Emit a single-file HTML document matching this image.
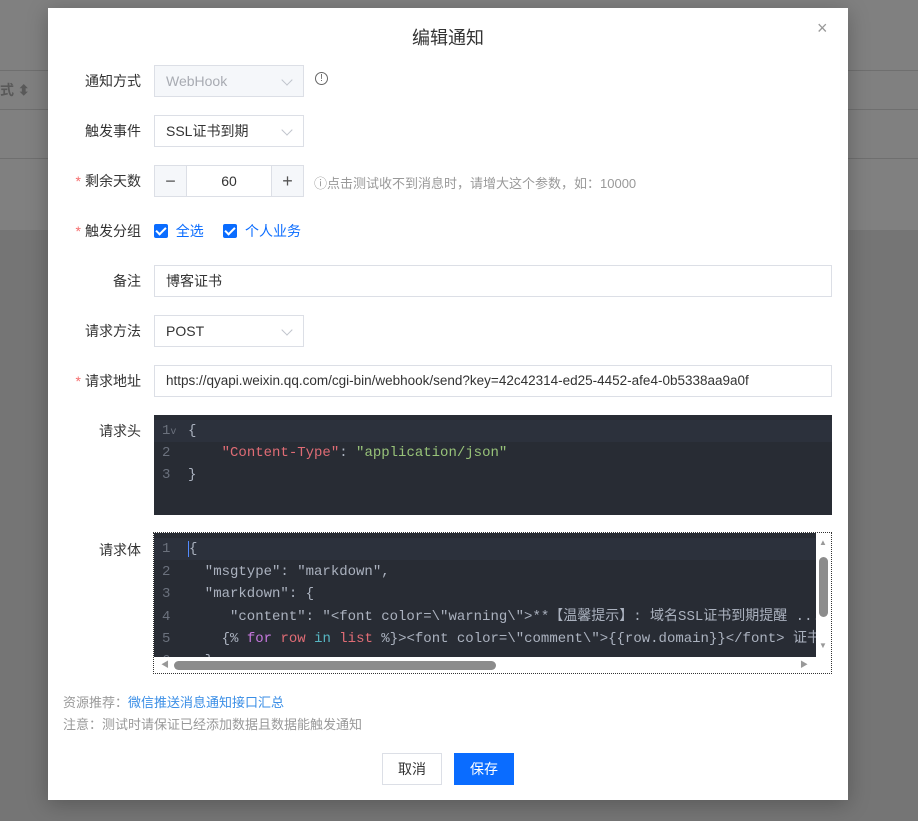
<!DOCTYPE html>
<html><head><meta charset="utf-8"><style>
*{box-sizing:border-box;margin:0;padding:0}
body{width:918px;height:821px;position:relative;overflow:hidden;background:#757575;font-family:"Liberation Sans","Noto Sans CJK SC",sans-serif;font-size:14px;color:#333}
.a{position:absolute}
.top{left:0;top:0;width:918px;height:230px;background:#808080}
.ln{left:0;width:918px;height:1px;background:#6f6f6f}
.dlg{left:48px;top:8px;width:800px;height:792px;background:#fff;box-shadow:0 4px 20px rgba(0,0,0,.25)}
.lbl{width:93px;text-align:right;font-size:14px;color:#333;left:0;line-height:20px}
.lbl i{color:#f56c6c;font-style:normal;margin-right:4px}
.box{border:1px solid #dcdfe6;height:32px;line-height:30px;padding-left:11px;font-size:14px;color:#333;background:#fff}
.arr{position:absolute;right:12px;top:10px;width:8px;height:8px;border-right:1px solid #c0c4cc;border-bottom:1px solid #c0c4cc;transform:rotate(45deg)}
.cb{display:inline-block;width:14px;height:14px;background:#0a6cff;border-radius:2px;position:relative;vertical-align:-2px}
.cb:after{content:"";position:absolute;left:4px;top:1px;width:4px;height:8px;border:solid #fff;border-width:0 2px 2px 0;transform:rotate(45deg)}
.code{font-family:"Liberation Mono","Noto Sans CJK SC",monospace;font-size:14px;background:#282c34;color:#abb2bf}
.row{position:absolute;left:0;height:22px;line-height:22px;white-space:pre}
.g{color:#6b717d;display:inline-block;width:34px;padding-left:8px}
</style></head><body>
<div class="a top"></div>
<div class="a ln" style="top:70px"></div>
<div class="a ln" style="top:109px"></div>
<div class="a ln" style="top:158px"></div>
<div class="a" style="left:0;top:80px;color:#333;font-size:14px;font-weight:bold;opacity:.5">式 ⬍</div>

<div class="a dlg">
<div class="a" style="left:0;width:800px;top:16px;text-align:center;font-size:18px;color:#333">编辑通知</div>
<div class="a" style="left:769px;top:10px;font-size:18px;color:#999">×</div>

<div class="a lbl" style="top:63px">通知方式</div>
<div class="a box" style="left:106px;top:57px;width:150px;background:#f5f7fa;color:#a8abb2">WebHook<span class="arr"></span></div>
<div class="a" style="left:267px;top:64px;width:13px;height:13px;border:1px solid #666;border-radius:50%;font-size:10px;line-height:11px;text-align:center;color:#666">!</div>

<div class="a lbl" style="top:113px">触发事件</div>
<div class="a box" style="left:106px;top:107px;width:150px">SSL证书到期<span class="arr"></span></div>

<div class="a lbl" style="top:163px"><i>*</i>剩余天数</div>
<div class="a" style="left:106px;top:157px;width:150px;height:32px;border:1px solid #dcdfe6;display:flex">
<div style="width:32px;background:#f5f7fa;border-right:1px solid #dcdfe6;text-align:center;line-height:30px;font-size:18px;color:#555">−</div>
<div style="flex:1;text-align:center;line-height:30px">60</div>
<div style="width:32px;background:#f5f7fa;border-left:1px solid #dcdfe6;text-align:center;line-height:30px;font-size:18px;color:#555">+</div></div>
<div class="a" style="left:266px;top:165px;color:#999;font-size:13px">ⓘ点击测试收不到消息时，请增大这个参数，如：10000</div>

<div class="a lbl" style="top:213px"><i>*</i>触发分组</div>
<div class="a" style="left:106px;top:213px;color:#0a6cff;line-height:20px"><span class="cb"></span>&nbsp;&nbsp;全选 &nbsp;&nbsp;&nbsp;&nbsp;<span class="cb"></span>&nbsp;&nbsp;个人业务</div>

<div class="a lbl" style="top:263px">备注</div>
<div class="a box" style="left:106px;top:257px;width:678px">博客证书</div>

<div class="a lbl" style="top:313px">请求方法</div>
<div class="a box" style="left:106px;top:307px;width:150px">POST<span class="arr"></span></div>

<div class="a lbl" style="top:363px"><i>*</i>请求地址</div>
<div class="a box" style="left:106px;top:357px;width:678px;font-size:13.5px">https://qyapi.weixin.qq.com/cgi-bin/webhook/send?key=42c42314-ed25-4452-afe4-0b5338aa9a0f</div>

<div class="a lbl" style="top:413px">请求头</div>
<div class="a code" style="left:106px;top:407px;width:678px;height:100px">
<div class="a" style="left:0;top:5px;width:678px;height:22px;background:#2c313c"></div>
<div class="row" style="top:5px"><span class="g">1<span style="font-size:10px">v</span></span>{</div>
<div class="row" style="top:27px"><span class="g">2</span>    <span style="color:#e06c75">"Content-Type"</span>: <span style="color:#98c379">"application/json"</span></div>
<div class="row" style="top:49px"><span class="g">3</span>}</div>
</div>

<div class="a lbl" style="top:532px">请求体</div>
<div class="a" style="left:105px;top:524px;width:679px;height:142px;border:1px dotted #333;background:#fff;overflow:hidden">
<div class="a code" style="left:0;top:0;width:662px;height:124px;overflow:hidden">
<div class="a" style="left:0;top:5px;width:662px;height:22px;background:#2c313c"></div>
<div class="row" style="top:5px"><span class="g">1</span><span style="border-left:1px solid #528bff"></span>{</div>
<div class="row" style="top:28px"><span class="g">2</span>  "msgtype": "markdown",</div>
<div class="row" style="top:50px"><span class="g">3</span>  "markdown": {</div>
<div class="row" style="top:73px"><span class="g">4</span>     "content": "&lt;font color=\"warning\"&gt;**【温馨提示】: 域名SSL证书到期提醒 ...</div>
<div class="row" style="top:95px"><span class="g">5</span>    {% <span style="color:#c678dd">for</span> <span style="color:#e06c75">row</span> <span style="color:#56b6c2">in</span> <span style="color:#e06c75">list</span> %}&gt;&lt;font color=\"comment\"&gt;{{row.domain}}&lt;/font&gt; 证书将于</div>
<div class="row" style="top:117px"><span class="g">6</span>  }</div>
</div>
<div class="a" style="left:662px;top:0;width:17px;height:124px;background:#fff">
<div class="a" style="left:3px;top:24px;width:9px;height:60px;background:#8c8c8c;border-radius:5px"></div>
<div class="a" style="left:3px;top:5px;font-size:8px;color:#999">▲</div>
<div class="a" style="left:3px;top:108px;font-size:8px;color:#999">▼</div></div>
<div class="a" style="left:0;top:124px;width:679px;height:17px;background:#fff">
<div class="a" style="left:20px;top:4px;width:322px;height:9px;background:#8c8c8c;border-radius:5px"></div>
<div class="a" style="left:7px;top:2px;font-size:8px;color:#999">◀</div>
<div class="a" style="left:646px;top:2px;font-size:8px;color:#999">▶</div></div>
</div>

<div class="a" style="left:15px;top:684px;font-size:13px;color:#999">资源推荐：<span style="color:#3a8ee6">微信推送消息通知接口汇总</span></div>
<div class="a" style="left:15px;top:706px;font-size:13px;color:#999">注意：测试时请保证已经添加数据且数据能触发通知</div>

<div class="a" style="left:334px;top:745px;width:60px;height:32px;border:1px solid #dcdfe6;text-align:center;line-height:30px;color:#333">取消</div>
<div class="a" style="left:406px;top:745px;width:60px;height:32px;background:#0a6cff;text-align:center;line-height:32px;color:#fff">保存</div>
</div>
</body></html>
